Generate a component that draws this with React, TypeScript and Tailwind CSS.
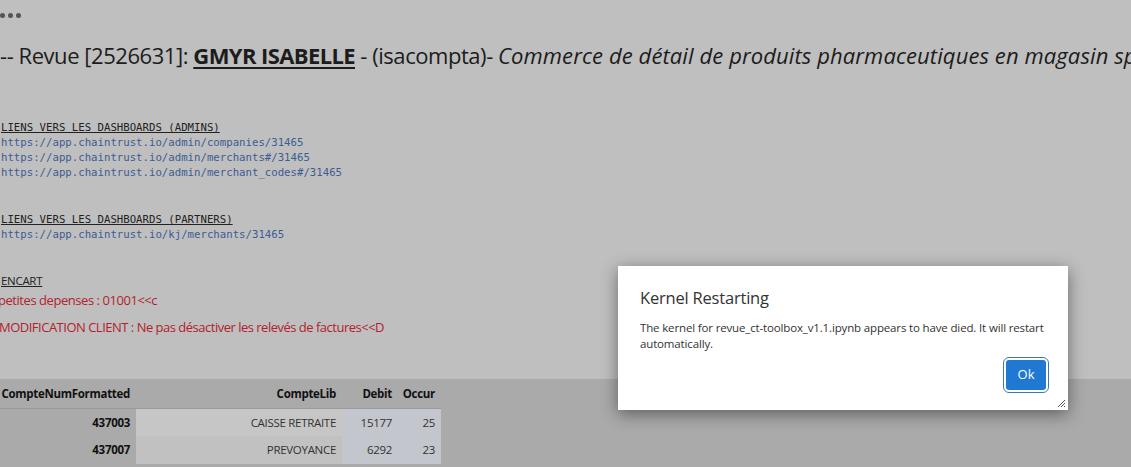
const adminLinks = [
  'https://app.chaintrust.io/admin/companies/31465',
  'https://app.chaintrust.io/admin/merchants#/31465',
  'https://app.chaintrust.io/admin/merchant_codes#/31465',
];

const rows = [
  { num: '437003', lib: 'CAISSE RETRAITE', debit: '15177', occur: '25', libBg: 'bg-[#c6c6c6]' },
  { num: '437007', lib: 'PREVOYANCE', debit: '6292', occur: '23', libBg: 'bg-[#c1c1c1]' },
];

const sans = "font-['Open_Sans','Noto_Sans',sans-serif]";
const mono = "font-['DejaVu_Sans_Mono','Liberation_Mono',monospace]";

function KernelDialog() {
  return (
    <div className="absolute left-[618px] top-[266px] w-[450px] h-[144px] bg-white shadow-[0_4px_16px_rgba(0,0,0,0.45)] flex flex-col">
      <div className={`${sans} px-[22px] pt-[20px] text-[16.5px] leading-[24px] text-[#333] tracking-[-0.2px]`}>
        Kernel Restarting
      </div>
      <p className={`${sans} px-[22px] mt-[10px] text-[11.5px] leading-[15.5px] text-[#333] tracking-[-0.15px]`}>
        The kernel for revue_ct-toolbox_v1.1.ipynb appears to have died. It will restart automatically.
      </p>
      <div className="flex justify-end mt-auto pr-[19px] pb-[17px]">
        <div className="p-[2px] rounded-[6px] border border-[#3a78b5]">
          <button className={`${sans} w-[40px] h-[30px] rounded-[3px] bg-[#1f78d1] text-white text-[13px]`}>
            Ok
          </button>
        </div>
      </div>
      <svg className="absolute right-[2px] bottom-[2px]" width="9" height="9" viewBox="0 0 9 9">
        <path d="M1 8 L8 1 M4 8 L8 4 M7 8 L8 7" stroke="#555" strokeWidth="1" />
      </svg>
    </div>
  );
}

export default function App() {
  return (
    <div className="relative w-[1131px] h-[467px] overflow-hidden bg-[#bfbfbf] flex flex-col">
      <div className="flex gap-[3px] pt-[13px] h-[18px]">
        <span className="w-[5px] h-[5px] rounded-full bg-[#555]" />
        <span className="w-[5px] h-[5px] rounded-full bg-[#555]" />
        <span className="w-[5px] h-[5px] rounded-full bg-[#555]" />
      </div>

      <h1 className={`${sans} mt-[22px] h-[30px] leading-[30px] text-[22px] text-[#1c1c1c] whitespace-nowrap tracking-[-0.45px]`}>
        -- Revue [2526631]: <b className="underline underline-offset-[3px] tracking-[-0.6px]">GMYR ISABELLE</b> - (isacompta)-{' '}
        <i className="tracking-[0.1px]">Commerce de détail de produits pharmaceutiques en magasin spécialisé</i>
      </h1>

      <div className={`${mono} mt-[50px] pl-[1px] text-[10.7px] leading-[15px]`}>
        <div className="underline text-[#222]">LIENS VERS LES DASHBOARDS (ADMINS)</div>
        {adminLinks.map((l) => (
          <div key={l} className="text-[#3d5c93]">{l}</div>
        ))}
      </div>

      <div className={`${mono} mt-[32px] pl-[1px] text-[10.7px] leading-[15px]`}>
        <div className="underline text-[#222]">LIENS VERS LES DASHBOARDS (PARTNERS)</div>
        <div className="text-[#3d5c93]">https://app.chaintrust.io/kj/merchants/31465</div>
      </div>

      <div className={`${sans} mt-[31px] ml-[1px] text-[11.5px] leading-[16px] text-[#222] underline tracking-[-0.3px]`}>
        ENCART
      </div>
      <div className={`${sans} ml-[-2px] mt-[2px] text-[13px] leading-[18px] text-[#b3222c] tracking-[-0.45px]`}>
        petites depenses : 01001&lt;&lt;c
      </div>
      <div className={`${sans} ml-[-1px] mt-[9px] text-[13px] leading-[18px] text-[#b3222c] tracking-[-0.5px]`}>
        MODIFICATION CLIENT : Ne pas désactiver les relevés de factures&lt;&lt;D
      </div>

      <div className="mt-[43px] flex-1 bg-[#aaaaaa]">
        <table className={`${sans} table-fixed w-[441px] text-[11.5px] text-[#111] border-collapse tracking-[-0.3px]`}>
          <colgroup>
            <col className="w-[136px]" />
            <col className="w-[206px]" />
            <col className="w-[55px]" />
            <col className="w-[44px]" />
          </colgroup>
          <thead>
            <tr className="h-[29px] border-b border-[#9a9a9a]">
              <th className="text-right pr-[6px] font-bold whitespace-nowrap">CompteNumFormatted</th>
              <th className="text-right pr-[6px] font-bold">CompteLib</th>
              <th className="text-right pr-[5px] font-bold">Debit</th>
              <th className="text-right pr-[6px] font-bold">Occur</th>
            </tr>
          </thead>
          <tbody>
            {rows.map((r) => (
              <tr key={r.num} className="h-[28px]">
                <th className="text-right pr-[6px] font-bold">{r.num}</th>
                <td className={`text-right pr-[6px] text-[#333] ${r.libBg}`}>{r.lib}</td>
                <td className="text-right pr-[5px] text-[#333] bg-[#c3c6cc]">{r.debit}</td>
                <td className="text-right pr-[6px] text-[#333] bg-[#c3c6cc]">{r.occur}</td>
              </tr>
            ))}
          </tbody>
        </table>
      </div>

      <KernelDialog />
    </div>
  );
}
